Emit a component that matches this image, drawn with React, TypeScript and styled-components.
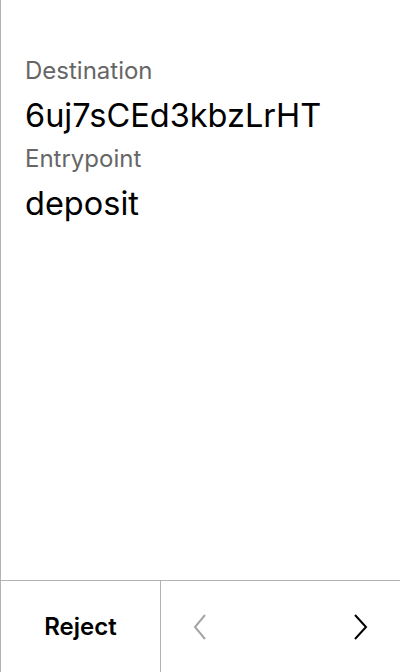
import React from "react";
import styled, { createGlobalStyle } from "styled-components";

const Global = createGlobalStyle`
  html, body { margin: 0; padding: 0; background: #fff; }
  body { font-family: Inter, "Noto Sans", sans-serif; }
  #root { height: 672px; }
`;

const Screen = styled.div`
  box-sizing: border-box;
  width: 400px;
  height: 672px;
  border-left: 1px solid #b3b3b3;
  display: flex;
  flex-direction: column;
  background: #fff;
`;

const Content = styled.div`
  flex: 1;
  padding: 55px 0 0 24px;
  display: flex;
  flex-direction: column;
`;

const Label = styled.div`
  font-size: 24px;
  line-height: 32px;
  color: #666666;
  margin-bottom: 9px;
`;

const Value = styled.div`
  font-size: 32.5px;
  line-height: 40px;
  color: #000;
  margin-bottom: 7px;
`;

const Footer = styled.div`
  height: 91px;
  border-top: 1px solid #b3b3b3;
  display: flex;
`;

const RejectButton = styled.button`
  width: 160px;
  border: none;
  border-right: 1px solid #b3b3b3;
  background: none;
  font-family: Inter, "Noto Sans", sans-serif;
  font-size: 24px;
  font-weight: 600;
  color: #000;
  padding: 0;
`;

const Nav = styled.div`
  flex: 1;
  display: flex;
  align-items: center;
  justify-content: space-between;
  padding: 0 32px 0 32px;
`;

const Arrow = styled.svg<{ $disabled?: boolean }>`
  width: 15px;
  height: 26px;
  stroke: ${(p) => (p.$disabled ? "#a6a6a6" : "#000")};
`;

export default function App() {
  return (
    <>
      <Global />
      <Screen>
        <Content>
          <Label>Destination</Label>
          <Value>6uj7sCEd3kbzLrHT</Value>
          <Label>Entrypoint</Label>
          <Value>deposit</Value>
        </Content>
        <Footer>
          <RejectButton>Reject</RejectButton>
          <Nav>
            <Arrow $disabled viewBox="0 0 15 26" fill="none" strokeWidth="2">
              <path d="M12 1 L2 13 L12 25" />
            </Arrow>
            <Arrow viewBox="0 0 15 26" fill="none" strokeWidth="2">
              <path d="M2 1 L13 13 L2 25" />
            </Arrow>
          </Nav>
        </Footer>
      </Screen>
    </>
  );
}
